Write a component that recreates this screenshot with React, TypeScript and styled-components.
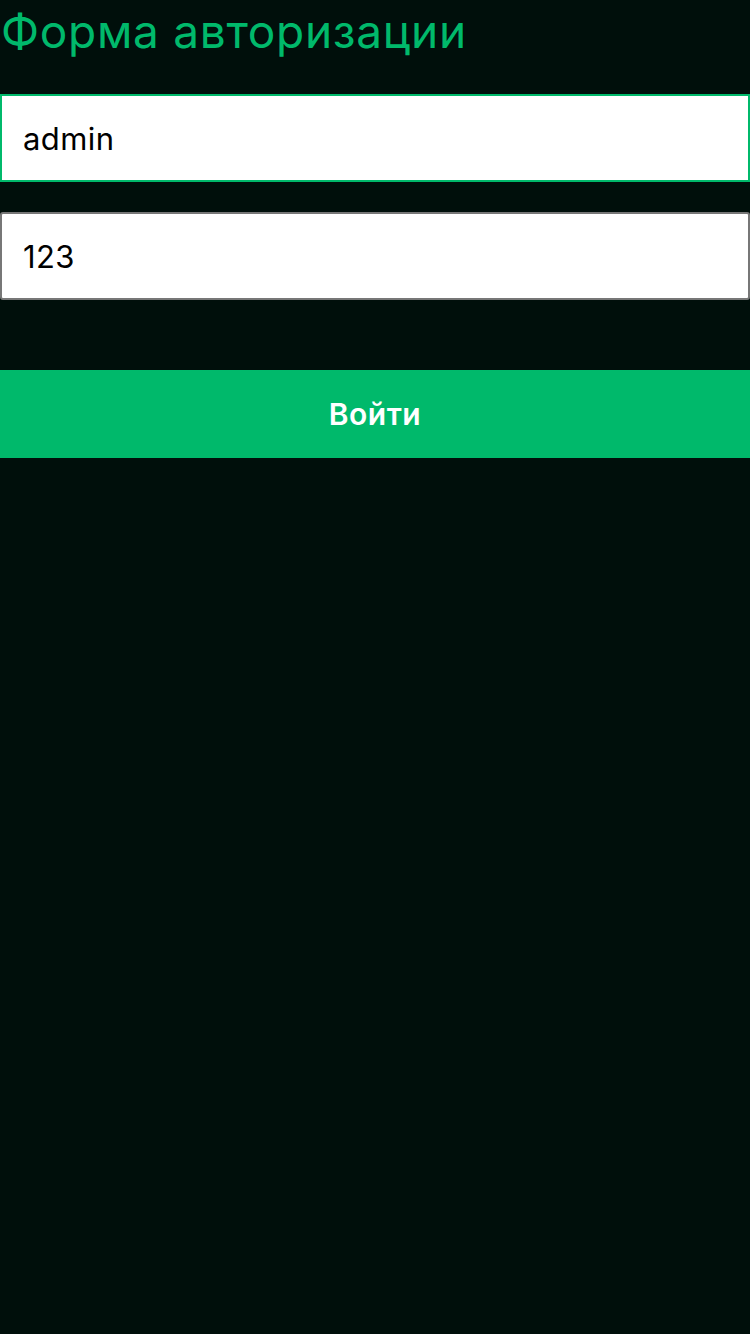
import styled, { createGlobalStyle } from "styled-components";

const GlobalStyle = createGlobalStyle`
	html, body {
		margin: 0;
		padding: 0;
		background-color: #000f0b;
	}
	* {
		box-sizing: border-box;
	}
`;

const Page = styled.div`
	min-height: 1334px;
	background-color: #000f0b;
	font-family: Inter, "Noto Sans", sans-serif;
`;

const Titulo = styled.h1`
	margin: 0;
	height: 64px;
	padding-left: 1px;
	font-size: 46px;
	font-weight: 400;
	letter-spacing: 0.7px;
	line-height: 62px;
	color: #00b96b;
`;

const Formulario = styled.form`
	display: flex;
	flex-direction: column;
	padding-top: 30px;
`;

const Campo = styled.input<{ $ativo?: boolean }>`
	height: 88px;
	width: 100%;
	margin: 0 0 30px;
	padding: 0 21px;
	border: ${({ $ativo }) => ($ativo ? "2px solid #00b96b" : "2px solid #777777")};
	border-radius: ${({ $ativo }) => ($ativo ? "0" : "3px")};
	background-color: #ffffff;
	color: #000000;
	font-family: Inter, "Noto Sans", sans-serif;
	font-size: 31px;
	letter-spacing: 0.4px;
	outline: none;
`;

const Botao = styled.button`
	height: 88px;
	width: 100%;
	margin-top: 40px;
	border: none;
	background-color: #00b96b;
	color: #ffffff;
	font-family: Inter, "Noto Sans", sans-serif;
	font-size: 30px;
	font-weight: 600;
	letter-spacing: 0.5px;
	cursor: pointer;
`;

export default function App() {
	return (
		<Page>
			<GlobalStyle />
			<Titulo>Форма авторизации</Titulo>
			<Formulario onSubmit={(e) => e.preventDefault()}>
				<Campo $ativo type="text" defaultValue="admin" />
				<Campo type="text" defaultValue="123" />
				<Botao type="submit">Войти</Botao>
			</Formulario>
		</Page>
	);
}
